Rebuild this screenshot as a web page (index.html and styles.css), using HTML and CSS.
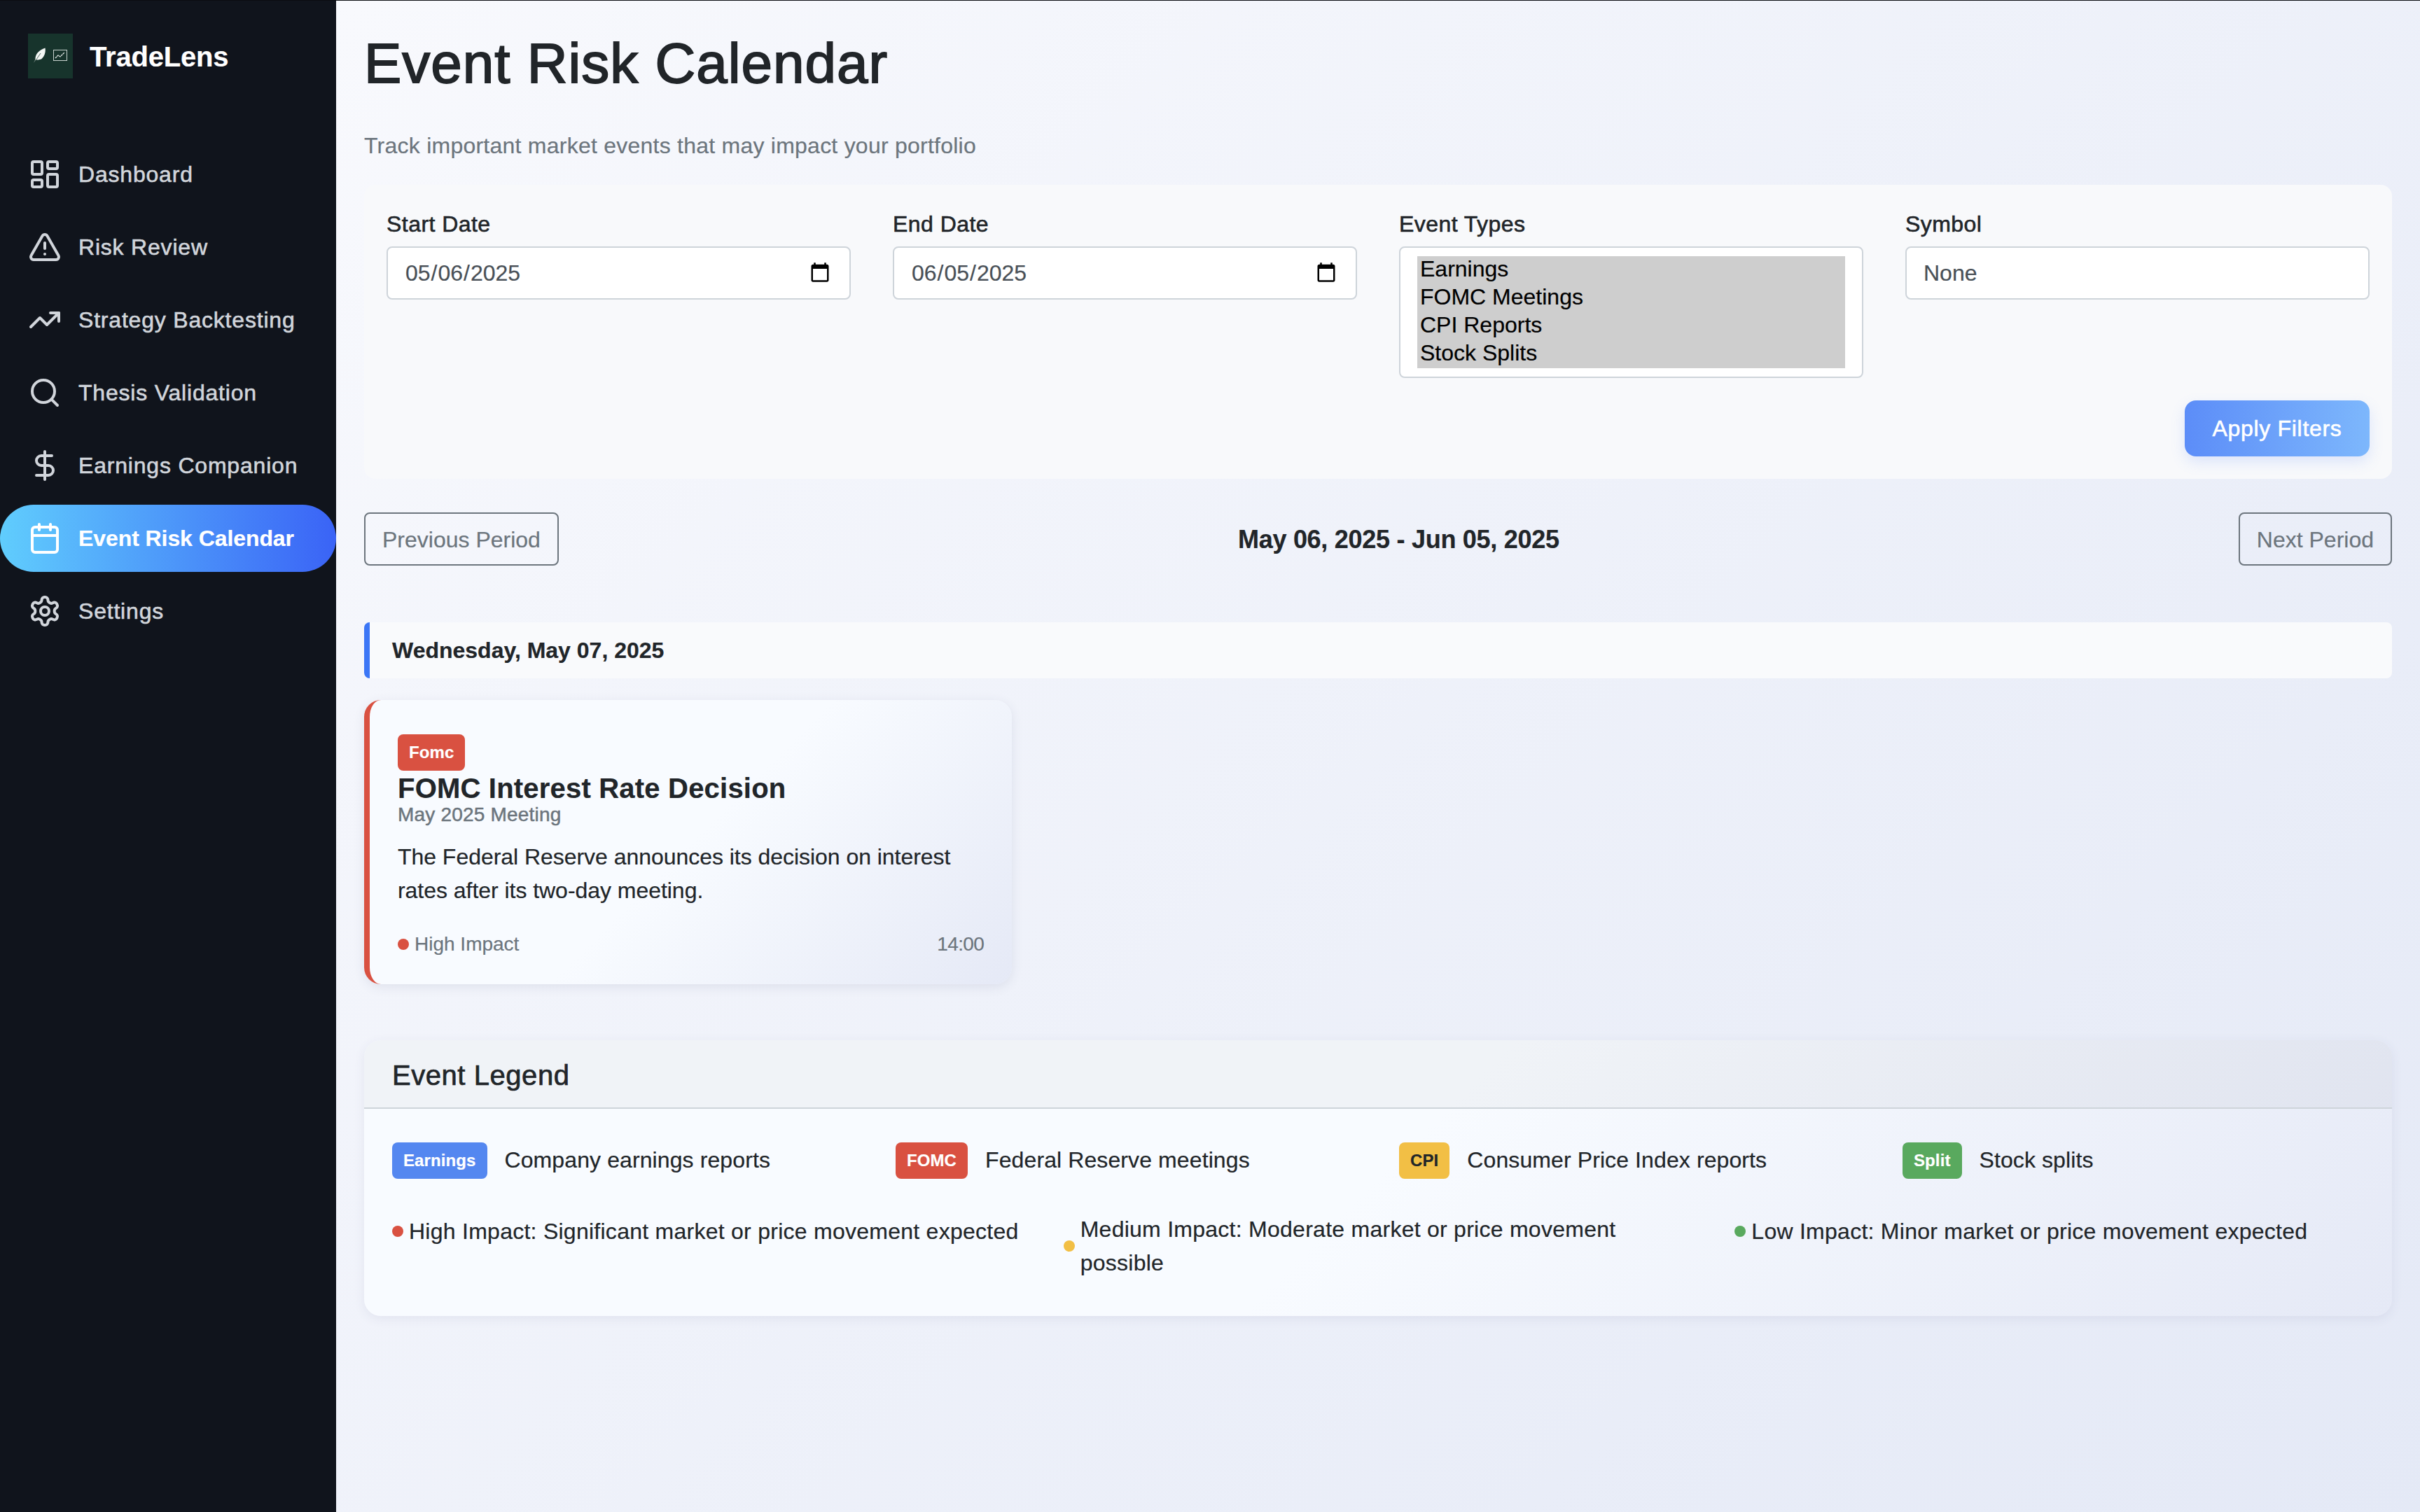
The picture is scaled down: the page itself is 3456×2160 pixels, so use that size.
FILE: index.html
```html
<!DOCTYPE html>
<html lang="en">
<head>
<meta charset="utf-8">
<title>Event Risk Calendar - TradeLens</title>
<link rel="stylesheet" href="styles.css">
</head>
<body>
<div class="app">
  <aside class="sidebar">
    <div class="brand">
      <div class="logo">
        <svg class="logo-art" viewBox="0 0 64 64">
          <path class="feather" d="M8 42 L10.500 37 C10 31 14 24 24.500 20.500 C25.500 26 24 32 19 36.500 C16 37.500 13 37.500 11 37.500 Z"/>
          <path class="feather-line" d="M8.500 42 L18 28"/>
          <rect class="chart-box" x="36.500" y="23.500" width="19" height="15"/>
          <polyline class="chart-line" points="39,35 43,31 46,33 52,27"/>
        </svg>
      </div>
      <span class="brand-name">TradeLens</span>
    </div>
    <nav class="nav">
      <a class="nav-item">
        <svg class="nav-icon" viewBox="0 0 24 24"><rect width="7" height="9" x="3" y="3" rx="1"/><rect width="7" height="5" x="14" y="3" rx="1"/><rect width="7" height="9" x="14" y="12" rx="1"/><rect width="7" height="5" x="3" y="16" rx="1"/></svg>
        <span>Dashboard</span>
      </a>
      <a class="nav-item">
        <svg class="nav-icon" viewBox="0 0 24 24"><path d="m21.73 18-8-14a2 2 0 0 0-3.48 0l-8 14A2 2 0 0 0 4 21h16a2 2 0 0 0 1.73-3"/><path d="M12 9v4"/><path d="M12 17h.01"/></svg>
        <span>Risk Review</span>
      </a>
      <a class="nav-item">
        <svg class="nav-icon" viewBox="0 0 24 24"><polyline points="22 7 13.5 15.5 8.5 10.5 2 17"/><polyline points="16 7 22 7 22 13"/></svg>
        <span>Strategy Backtesting</span>
      </a>
      <a class="nav-item">
        <svg class="nav-icon" viewBox="0 0 24 24"><circle cx="11" cy="11" r="8"/><path d="m21 21-4.300-4.300"/></svg>
        <span>Thesis Validation</span>
      </a>
      <a class="nav-item">
        <svg class="nav-icon" viewBox="0 0 24 24"><line x1="12" x2="12" y1="2" y2="22"/><path d="M17 5H9.500a3.500 3.500 0 0 0 0 7h5a3.500 3.500 0 0 1 0 7H6"/></svg>
        <span>Earnings Companion</span>
      </a>
      <a class="nav-item active">
        <svg class="nav-icon" viewBox="0 0 24 24"><path d="M8 2v4"/><path d="M16 2v4"/><rect width="18" height="18" x="3" y="4" rx="2"/><path d="M3 10h18"/></svg>
        <span>Event Risk Calendar</span>
      </a>
      <a class="nav-item">
        <svg class="nav-icon" viewBox="0 0 24 24"><path d="M12.220 2h-.44a2 2 0 0 0-2 2v.18a2 2 0 0 1-1 1.730l-.43.25a2 2 0 0 1-2 0l-.15-.08a2 2 0 0 0-2.730.73l-.22.38a2 2 0 0 0 .73 2.730l.15.1a2 2 0 0 1 1 1.720v.51a2 2 0 0 1-1 1.740l-.15.09a2 2 0 0 0-.73 2.730l.22.38a2 2 0 0 0 2.730.73l.15-.08a2 2 0 0 1 2 0l.43.25a2 2 0 0 1 1 1.730V20a2 2 0 0 0 2 2h.44a2 2 0 0 0 2-2v-.18a2 2 0 0 1 1-1.730l.43-.25a2 2 0 0 1 2 0l.15.08a2 2 0 0 0 2.730-.73l.22-.39a2 2 0 0 0-.73-2.730l-.15-.08a2 2 0 0 1-1-1.740v-.5a2 2 0 0 1 1-1.740l.15-.09a2 2 0 0 0 .73-2.730l-.22-.38a2 2 0 0 0-2.730-.73l-.15.08a2 2 0 0 1-2 0l-.43-.25a2 2 0 0 1-1-1.730V4a2 2 0 0 0-2-2z"/><circle cx="12" cy="12" r="3"/></svg>
        <span>Settings</span>
      </a>
    </nav>
  </aside>

  <main class="main">
    <h1 class="page-title">Event Risk Calendar</h1>
    <p class="page-subtitle">Track important market events that may impact your portfolio</p>

    <section class="filters">
      <div class="filter-grid">
        <div class="field">
          <label class="field-label" for="start">Start Date</label>
          <input class="control" id="start" type="date" value="2025-05-06">
        </div>
        <div class="field">
          <label class="field-label" for="end">End Date</label>
          <input class="control" id="end" type="date" value="2025-06-05">
        </div>
        <div class="field">
          <label class="field-label" for="types">Event Types</label>
          <select class="control type-select" id="types" multiple size="4">
            <option selected>Earnings</option>
            <option selected>FOMC Meetings</option>
            <option selected>CPI Reports</option>
            <option selected>Stock Splits</option>
          </select>
        </div>
        <div class="field">
          <label class="field-label" for="symbol">Symbol</label>
          <input class="control" id="symbol" type="text" value="None">
        </div>
      </div>
      <div class="filter-actions">
        <button class="apply-btn">Apply Filters</button>
      </div>
    </section>

    <div class="period-nav">
      <button class="period-btn">Previous Period</button>
      <div class="period-label">May 06, 2025 - Jun 05, 2025</div>
      <button class="period-btn">Next Period</button>
    </div>

    <div class="date-header">Wednesday, May 07, 2025</div>

    <div class="event-grid">
      <article class="event-card">
        <span class="badge badge-fomc">Fomc</span>
        <h3 class="event-title">FOMC Interest Rate Decision</h3>
        <div class="event-sub">May 2025 Meeting</div>
        <p class="event-desc">The Federal Reserve announces its decision on interest rates after its two-day meeting.</p>
        <div class="event-foot">
          <span class="impact"><i class="dot dot-high"></i>High Impact</span>
          <span class="event-time">14:00</span>
        </div>
      </article>
    </div>

    <section class="legend">
      <div class="legend-head">Event Legend</div>
      <div class="legend-body">
        <div class="legend-types">
          <div class="legend-type"><span class="badge badge-earnings">Earnings</span><span class="legend-text">Company earnings reports</span></div>
          <div class="legend-type"><span class="badge badge-fomc">FOMC</span><span class="legend-text">Federal Reserve meetings</span></div>
          <div class="legend-type"><span class="badge badge-cpi">CPI</span><span class="legend-text">Consumer Price Index reports</span></div>
          <div class="legend-type"><span class="badge badge-split">Split</span><span class="legend-text">Stock splits</span></div>
        </div>
        <div class="legend-impacts">
          <div class="legend-impact single"><i class="dot dot-high"></i><span>High Impact: Significant market or price movement expected</span></div>
          <div class="legend-impact"><i class="dot dot-med"></i><span>Medium Impact: Moderate market or price movement possible</span></div>
          <div class="legend-impact single"><i class="dot dot-low"></i><span>Low Impact: Minor market or price movement expected</span></div>
        </div>
      </div>
    </section>
  </main>
</div>
</body>
</html>
```
FILE: styles.css
```css
* { box-sizing: border-box; }
html, body { margin: 0; height: 100%; }
body {
  font-family: "Liberation Sans", Arial, sans-serif;
  font-size: 32px;
  line-height: 48px;
  color: #212529;
  background: #0b0d12;
  -webkit-text-stroke: .2px currentColor;
}
.app {
  display: flex;
  height: 2159px;
  margin-top: 1px;
}

/* Sidebar */
.sidebar {
  flex: 0 0 480px;
  background: #10141c;
  color: #d1d5db;
}
.brand {
  display: flex;
  align-items: center;
  gap: 24px;
  padding: 47px 40px 0;
}
.logo {
  width: 64px;
  height: 64px;
  background: #17342c;
  flex: none;
}
.logo-art { display: block; width: 64px; height: 64px; }
.feather { fill: #f3f6f4; }
.feather-line { stroke: #17342c; stroke-width: .7; fill: none; }
.chart-box { fill: none; stroke: #c9d4cf; stroke-width: 1; }
.chart-line { fill: none; stroke: #f3f6f4; stroke-width: 1.200; stroke-dasharray: 3 .6; }
.brand-name {
  padding-top: 2px;
  font-size: 40px;
  font-weight: 700;
  color: #fff;
  letter-spacing: -.2px;
}
.nav {
  display: flex;
  flex-direction: column;
  gap: 8px;
  margin-top: 89px;
}
.nav-item {
  display: flex;
  align-items: center;
  gap: 24px;
  height: 96px;
  padding-left: 40px;
  font-size: 32px;
  letter-spacing: .8px;
  -webkit-text-stroke: .6px currentColor;
  border-radius: 48px;
}
.nav-icon {
  width: 48px;
  height: 48px;
  flex: none;
  fill: none;
  stroke: currentColor;
  stroke-width: 2;
  stroke-linecap: round;
  stroke-linejoin: round;
}
.nav-item.active {
  color: #fff;
  background: linear-gradient(90deg, #60cdfd, #3a63f6);
  font-weight: 700;
  letter-spacing: -.08px;
  -webkit-text-stroke: .2px currentColor;
}

/* Main */
.main {
  flex: 1;
  min-width: 0;
  padding: 42px 40px 0;
  background: linear-gradient(135deg, #f8f9fd 0%, #e4e9f6 100%);
}
.page-title {
  margin: 0 0 45px;
  font-size: 80px;
  line-height: 96px;
  font-weight: 400;
  letter-spacing: 1px;
  -webkit-text-stroke: 1.800px currentColor;
}
.page-subtitle {
  margin: 0 0 32px;
  color: #6c757d;
  font-size: 32px;
  line-height: 48px;
  letter-spacing: .24px;
}

/* Filters */
.filters {
  padding: 32px;
  background: #f8f9fb;
  border-radius: 16px;
}
.filter-grid {
  display: grid;
  grid-template-columns: repeat(4, 1fr);
  column-gap: 60px;
}
.field { display: flex; flex-direction: column; align-items: stretch; }
.field-label {
  margin-bottom: 8px;
  letter-spacing: .45px;
  -webkit-text-stroke: .6px currentColor;
}
.control {
  display: block;
  width: 100%;
  height: 76px;
  padding: 16px 24px;
  border: 2px solid #ced4da;
  border-radius: 8px;
  background: #fff;
  color: #495057;
  font: 32px/38px "Liberation Sans", Arial, sans-serif;
  outline: none;
}
.type-select {
  height: 188px;
  padding: 12px 24px;
  overflow: hidden;
  color: #000;
}
.type-select option {
  min-height: 40px;
  height: 40px;
  line-height: 40px;
  padding: 0 4px;
  color: #000;
}
.type-select option:checked {
  background: linear-gradient(#cecece, #cecece);
  color: #000;
}
.filter-actions {
  display: flex;
  justify-content: flex-end;
  margin-top: 32px;
}
.apply-btn {
  width: 264px;
  height: 80px;
  border: 0;
  border-radius: 16px;
  color: #fff;
  background: linear-gradient(90deg, #5c8df8, #7db7fc);
  font: 32px/48px "Liberation Sans", Arial, sans-serif;
  letter-spacing: .7px;
  -webkit-text-stroke: .6px currentColor;
  box-shadow: 0 8px 20px rgba(92, 141, 248, .18);
}

/* Period nav */
.period-nav {
  display: flex;
  align-items: center;
  justify-content: space-between;
  margin-top: 48px;
}
.period-btn {
  height: 76px;
  padding: 1px 24px 0;
  border: 2px solid #6c757d;
  border-radius: 8px;
  background: transparent;
  color: #6c757d;
  font: 32px/48px "Liberation Sans", Arial, sans-serif;
}
.period-label {
  padding-top: 2px;
  font-size: 36px;
  font-weight: 700;
  letter-spacing: -.28px;
}

/* Date header and event */
.date-header {
  display: flex;
  align-items: center;
  height: 80px;
  margin-top: 81px;
  padding-left: 32px;
  border-left: 8px solid #3b76f6;
  border-radius: 8px;
  background: #f9fafc;
  font-weight: 700;
}
.event-grid {
  display: grid;
  grid-template-columns: repeat(3, 1fr);
  column-gap: 60px;
  margin-top: 31px;
}
.event-card {
  height: 406px;
  padding: 48px 40px 0;
  border-left: 8px solid #d95141;
  border-radius: 24px;
  background: linear-gradient(135deg, #f8fbff 0%, #f8fbff 50%, #e5e9f6 100%);
  box-shadow: 0 4px 16px rgba(60, 70, 110, .1);
}
.badge {
  display: inline-flex;
  align-items: center;
  height: 52px;
  padding: 0 16px;
  border-radius: 8px;
  color: #fff;
  font-size: 24px;
  font-weight: 700;
  line-height: 36px;
  letter-spacing: .1px;
  flex: none;
}
.badge-fomc { background: #d95141; }
.badge-earnings { background: #5487f0; }
.badge-cpi { background: #f2bf45; color: #212529; }
.badge-split { background: #59a95e; }
.event-title {
  margin: 0;
  padding-top: 1px;
  font-size: 40px;
  line-height: 48px;
  font-weight: 700;
  letter-spacing: .2px;
}
.event-sub {
  margin-bottom: 22px;
  color: #6c757d;
  font-size: 28px;
  line-height: 28px;
  letter-spacing: .2px;
  -webkit-text-stroke: .5px currentColor;
}
.event-desc { margin: 0; letter-spacing: -.04px; }
.event-foot {
  display: flex;
  justify-content: space-between;
  align-items: center;
  margin-top: 33px;
  color: #6c757d;
  font-size: 28px;
  line-height: 40px;
}
.event-time { letter-spacing: -.6px; }
.impact { display: flex; align-items: center; }
.dot {
  display: block;
  flex: none;
  width: 16px;
  height: 16px;
  margin-right: 8px;
  border-radius: 50%;
}
.dot-high { background: #d95141; }
.dot-med { background: #f2bf45; }
.dot-low { background: #59a95e; }

/* Legend */
.legend {
  height: 394px;
  margin-top: 80px;
  overflow: hidden;
  border-radius: 24px;
  background: linear-gradient(135deg, #f8fbff 0%, #f8fbff 50%, #e5e9f6 100%);
  box-shadow: 0 4px 16px rgba(60, 70, 110, .08);
}
.legend-head {
  height: 98px;
  padding: 26px 40px 0;
  border-bottom: 2px solid #ced4da;
  background: rgba(0, 0, 0, .03);
  font-size: 40px;
  line-height: 48px;
  letter-spacing: .55px;
  -webkit-text-stroke: .7px currentColor;
}
.legend-body { padding: 48px 40px; }
.legend-types {
  display: grid;
  grid-template-columns: repeat(4, 1fr);
  column-gap: 60px;
}
.legend-type { display: flex; align-items: center; gap: 25px; }
.legend-text { padding-bottom: 2px; letter-spacing: .1px; }
.legend-impacts {
  display: grid;
  grid-template-columns: repeat(3, 1fr);
  column-gap: 60px;
  align-items: start;
  margin-top: 48px;
  letter-spacing: .26px;
}
.legend-impact { display: flex; align-items: center; }
.legend-impact.single { margin-top: 3px; }
```
